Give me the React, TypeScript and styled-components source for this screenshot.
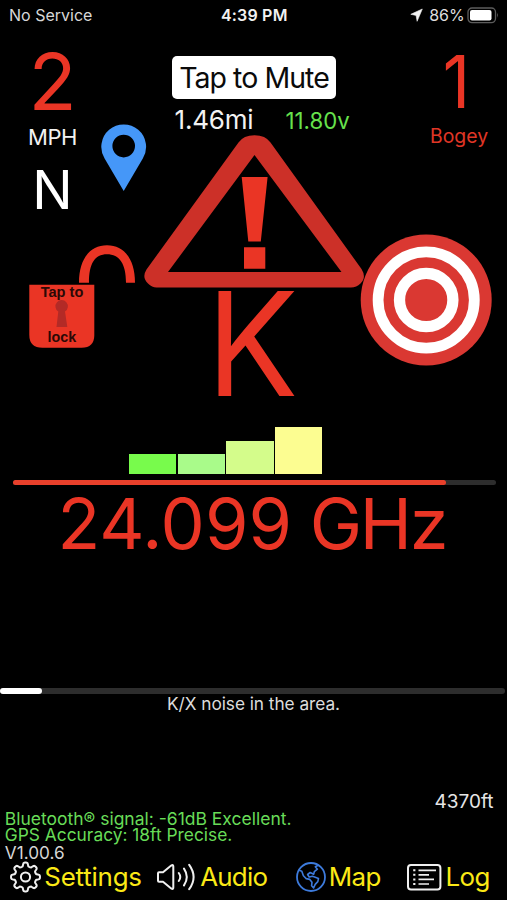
import React from 'react';
import styled, { createGlobalStyle } from 'styled-components';

const RED = '#ea3525';

const GlobalStyle = createGlobalStyle`
  * { box-sizing: border-box; }
  body { margin: 0; background: #000; font-family: Inter, "Liberation Sans", sans-serif; }
  svg { display: block; flex: none; }
`;

const Screen = styled.div`
  width: 507px;
  height: 900px;
  overflow: hidden;
  background: #000;
  display: flex;
  flex-direction: column;
`;

const Label = styled.span<{ $size: number; $line: number; $color?: string; $track?: number; $weight?: number }>`
  display: block;
  white-space: pre;
  font-size: ${p => p.$size}px;
  line-height: ${p => p.$line}px;
  color: ${p => p.$color ?? '#f2f2f2'};
  letter-spacing: ${p => p.$track ?? 0}px;
  font-weight: ${p => p.$weight ?? 400};
`;

const StatusBar = styled.header`
  height: 30px;
  padding: 0 7.5px 0 9px;
  display: grid;
  grid-template-columns: 1fr auto 1fr;
  align-items: center;
`;

const StatusRight = styled.div`
  display: flex;
  align-items: center;
  justify-content: flex-end;
`;

const ArrowIcon = styled.svg`
  margin-right: 6.5px;
`;

const BatteryIcon = styled.svg`
  margin-left: 2px;
`;

const Dashboard = styled.main`
  height: 397px;
  display: grid;
  grid-template-columns: 144px 220px 143px;
`;

const Column = styled.section`
  display: flex;
  flex-direction: column;
  align-items: flex-start;
  min-width: 0;
`;

const SpeedRow = styled.div`
  display: flex;
  height: 215px;
`;

const Speed = styled.div`
  width: 101px;
  padding: 11px 0 0 4px;
  text-align: center;
`;

const PinIcon = styled.svg`
  margin-top: 93px;
`;

const LockButton = styled.button`
  margin-left: 29px;
  padding: 0;
  border: 0;
  background: none;
`;

const CenterColumn = styled(Column)`
  align-items: center;
`;

const MuteButton = styled.button`
  margin-top: 25.5px;
  width: 164px;
  height: 43.5px;
  padding: 0;
  border: 0;
  border-radius: 5px;
  background: #fff;
  font-family: inherit;
  display: flex;
  align-items: center;
  justify-content: center;
`;

const Readouts = styled.div`
  width: 220px;
  height: 36px;
  padding-left: 30.5px;
  display: grid;
  grid-template-columns: 111px 1fr;
`;

const Band = styled.div`
  padding: 1px 4px 0 0;
  transform: scaleX(0.95);
`;

const Bogeys = styled.div`
  height: 204px;
  padding: 11px 0 0 66px;
`;

const BogeyCount = styled.div`
  width: 40px;
  padding-left: 12px;
  transform: scaleX(0.92);
`;

const TargetIcon = styled.svg`
  margin-left: -4px;
`;

const Strength = styled.div`
  height: 47px;
  margin-left: 129px;
  display: flex;
  align-items: flex-end;
  gap: 1.5px;
`;

const StrengthBar = styled.div<{ $height: number; $color: string }>`
  width: 47.2px;
  height: ${p => p.$height}px;
  background: ${p => p.$color};
`;

const Track = styled.div<{ $margin: string }>`
  height: 5.5px;
  margin: ${p => p.$margin};
  flex: none;
  border-radius: 3px;
  background: #2d2d2d;
`;

const Fill = styled.div<{ $width: number; $color: string }>`
  width: ${p => p.$width}px;
  height: 100%;
  border-radius: 3px;
  background: ${p => p.$color};
`;

const Frequency = styled.div`
  height: 203px;
  padding-left: 57.5px;
  word-spacing: -2px;
`;

const Unit = styled.span`
  letter-spacing: -2.2px;
`;

const Notice = styled.div`
  height: 99px;
  text-align: center;
`;

const Altitude = styled.div`
  padding-right: 13.5px;
  text-align: right;
`;

const Diagnostics = styled.div`
  padding: 0.5px 0 0 4.8px;
`;

const NavBar = styled.nav`
  padding-left: 9px;
  display: grid;
  grid-template-columns: 147px 139px 111px 1fr;
`;

const NavItem = styled.a<{ $gap: number }>`
  display: flex;
  align-items: center;
  gap: ${p => p.$gap}px;
`;

const gearPath = Array.from({ length: 161 }, (_, i) => {
  const a = (i / 160) * Math.PI * 2;
  const r = 12.6 + 1.9 * Math.tanh(2.2 * Math.cos(8 * a));
  return `${i ? 'L' : 'M'}${(16.5 + r * Math.sin(a)).toFixed(2)} ${(16 - r * Math.cos(a)).toFixed(2)}`;
}).join('') + 'Z';

const Gear = () => (
  <svg width="33" height="32" viewBox="0 0 33 32" fill="none" stroke="#f0f0f0" strokeWidth="2">
    <path d={gearPath} strokeLinejoin="round" />
    <circle cx="16.5" cy="16" r="4.6" />
  </svg>
);

const Speaker = () => (
  <svg width="40" height="32" viewBox="0 0 40 32" fill="none" stroke="#f0f0f0" strokeWidth="2" strokeLinecap="round" strokeLinejoin="round">
    <path d="M2 12.3Q2 11.3 3 11.3H7L15.2 4.6Q17.3 3.1 17.3 5.6V26.4Q17.3 28.9 15.2 27.4L7 20.7H3Q2 20.7 2 19.7Z" />
    <path d="M22.8 12Q25.7 16 22.8 20M28 7.6Q33.6 16 28 24.4M33.2 3.8Q42 16 33.2 28.2" />
  </svg>
);

const Globe = () => (
  <svg width="32" height="32" viewBox="0 0 32 32" fill="none" stroke="#3d7bdc" strokeWidth="1.6" strokeLinejoin="round">
    <circle cx="16" cy="16" r="14" strokeWidth="1.8" />
    <path d="M4.2 9.2L6.8 10.2L8.4 14.8L11.2 17.6L14.8 18.4L17 21.2L16.6 24.8L18.6 27L20.2 23.4L22.8 20.6L23.5 17.4L19.6 16L17.4 15.3L14.2 16L12.6 13.5L15.2 11.5L18.7 13.2L19.3 10.6L22.4 8.2L20.3 5.8L23.2 4.3" />
  </svg>
);

const List = () => (
  <svg width="36" height="32" viewBox="0 0 36 32" fill="none" stroke="#f0f0f0" strokeWidth="2">
    <rect x="2" y="4" width="32.4" height="24.6" rx="3" />
    <path d="M12.5 9.3H30M12.5 13.8H23M12.5 18.4H28M12.5 23H23" strokeWidth="1.7" />
    <path d="M7.2 9.3H9.4M7.2 13.8H9.4M7.2 18.4H9.4M7.2 23H9.4" strokeWidth="2" />
  </svg>
);

const strength = [
  { height: 20, color: '#78fb4c' },
  { height: 20, color: '#a9fb8a' },
  { height: 33.5, color: '#d4fc8b' },
  { height: 47, color: '#fcfd91' },
];

const nav = [
  { icon: <Gear />, text: 'Settings', gap: 2.3, size: 25.9, track: -0.2 },
  { icon: <Speaker />, text: 'Audio', gap: 4.3, size: 25.9, track: -0.8 },
  { icon: <Globe />, text: 'Map', gap: 1.7, size: 25.9, track: -0.5 },
  { icon: <List />, text: 'Log', gap: 3.4, size: 25.9, track: -0.5 },
];

export default function App() {
  return (
    <Screen>
      <GlobalStyle />
      <StatusBar>
        <Label $size={16} $line={30} $color="#d8d8d8">No Service</Label>
        <Label $size={16} $line={30} $weight={600} $track={0.2}>4:39 PM</Label>
        <StatusRight>
          <ArrowIcon width="13" height="14" viewBox="0 0 13 14">
            <path d="M.8 6.3L12.3 1L7.1 13.3L6.1 7.4Z" fill="#f2f2f2" stroke="#f2f2f2" strokeWidth=".6" strokeLinejoin="round" />
          </ArrowIcon>
          <Label $size={16} $line={30} $color="#dedede" $track={-0.1}>86%</Label>
          <BatteryIcon width="33" height="17" viewBox="0 0 33 17">
            <rect x="1" y="1" width="27.5" height="14.6" rx="4" fill="none" stroke="#5c5c5c" strokeWidth="1.3" />
            <rect x="3" y="3" width="21.5" height="10.6" rx="2" fill="#fff" />
            <path d="M30.2 5.8Q32 8.3 30.2 10.8Z" fill="#6a6a6a" />
          </BatteryIcon>
        </StatusRight>
      </StatusBar>

      <Dashboard>
        <Column>
          <SpeedRow>
            <Speed>
              <Label $size={79} $line={80} $color={RED}>2</Label>
              <Label $size={22} $line={32} $track={-0.4}>MPH</Label>
              <Label $size={53.6} $line={73} $color="#fff">N</Label>
            </Speed>
            <PinIcon width="46" height="69" viewBox="0 0 46 69">
              <path fillRule="evenodd" fill="#4597f8" d="M22.7 68L3.6 35.6A22.4 22.4 0 1 1 41.8 35.6ZM22.7 11.8a11.3 11.3 0 1 0 0 22.6a11.3 11.3 0 1 0 0-22.6Z" />
            </PinIcon>
          </SpeedRow>
          <LockButton>
            <svg width="107" height="104" viewBox="0 0 107 104">
              <path fill={RED} d="M50 37.7C50 14 61 .3 78 .3S106 14 106 37.7H97C97 19 90.5 9.3 78 9.3S60 19 60 37.7Z" />
              <path fill={RED} d="M.3 39.7H65.3V90Q65.3 102.7 52.5 102.7H13.5Q.3 102.7 .3 90Z" />
              <path fill="#b32a26" d="M29.3 66.5A6.2 6.2 0 1 1 36 66.5L38.3 82H27.5Z" />
              <text x="33" y="52" textAnchor="middle" fill="#2b0906" fontFamily="Liberation Sans, sans-serif" fontWeight="700" fontSize="14.6">Tap to</text>
              <text x="32.8" y="96.5" textAnchor="middle" fill="#2b0906" fontFamily="Liberation Sans, sans-serif" fontWeight="700" fontSize="14.3">lock</text>
            </svg>
          </LockButton>
        </Column>

        <CenterColumn>
          <MuteButton>
            <Label $size={28.5} $line={43} $color="#0a0a0a" $track={-0.95}>Tap to Mute</Label>
          </MuteButton>
          <Readouts>
            <Label $size={26} $line={41} $track={-0.2}>1.46mi</Label>
            <Label $size={22.2} $line={44} $color="#66e24c">11.80v</Label>
          </Readouts>
          <svg width="220" height="153" viewBox="144 135 220 153">
            <path fillRule="evenodd" fill="#cc3028" d="M238.5 142.5Q243.5 135.2 254.5 135.2T270.5 142.5L361.5 269Q366.8 277.5 360.5 283.5Q356.5 287.5 351 287.5H156.5Q152 287.5 148 283.5Q141.5 277.5 146.5 269.5ZM254.5 155L168 272H341.5Z" />
            <path fill={RED} d="M241.7 177H267.6L260.8 241.5H248.3ZM244 247.2H265.3V268.8H244Z" />
          </svg>
          <Band>
            <Label $size={143.7} $line={111.5} $color={RED}>K</Label>
          </Band>
        </CenterColumn>

        <Column>
          <Bogeys>
            <BogeyCount>
              <Label $size={73} $line={81} $color={RED}>1</Label>
            </BogeyCount>
            <Label $size={19.4} $line={28} $color="#e03626">Bogey</Label>
          </Bogeys>
          <TargetIcon width="132" height="132" viewBox="0 0 132 132">
            <circle cx="66.2" cy="66" r="65.5" fill="#da3832" />
            <circle cx="66.2" cy="66" r="48.1" fill="none" stroke="#fff" strokeWidth="10.8" />
            <circle cx="66.2" cy="66" r="26.7" fill="none" stroke="#fff" strokeWidth="11.3" />
          </TargetIcon>
        </Column>
      </Dashboard>

      <Strength>
        {strength.map(s => <StrengthBar key={s.color} $height={s.height} $color={s.color} />)}
      </Strength>
      <Track $margin="5.5px 11px 0 13px"><Fill $width={433} $color="#e8402b" /></Track>
      <Frequency>
        <Label $size={70.2} $line={77} $color={RED} $track={0}>24.099 <Unit>GHz</Unit></Label>
      </Frequency>
      <Track $margin="0 2.5px 0 0"><Fill $width={41.5} $color="#fff" /></Track>
      <Notice>
        <Label $size={17.3} $line={19} $color="#dcdcdc" $track={-0.06}>K/X noise in the area.</Label>
      </Notice>
      <Altitude>
        <Label $size={19} $line={17.5} $color="#e6e6e6">4370ft</Label>
      </Altitude>
      <Diagnostics>
        <Label $size={17.5} $line={16.5} $color="#68dc58">Bluetooth® signal: -61dB Excellent.</Label>
        <Label $size={17.35} $line={16.5} $color="#68dc58">GPS Accuracy: 18ft Precise.</Label>
        <Label $size={17.2} $line={17} $color="#d6d6d6">V1.00.6</Label>
      </Diagnostics>
      <NavBar>
        {nav.map(n => (
          <NavItem key={n.text} $gap={n.gap}>
            {n.icon}
            <Label $size={n.size} $line={32} $color="#fbe916" $track={n.track}>{n.text}</Label>
          </NavItem>
        ))}
      </NavBar>
    </Screen>
  );
}
